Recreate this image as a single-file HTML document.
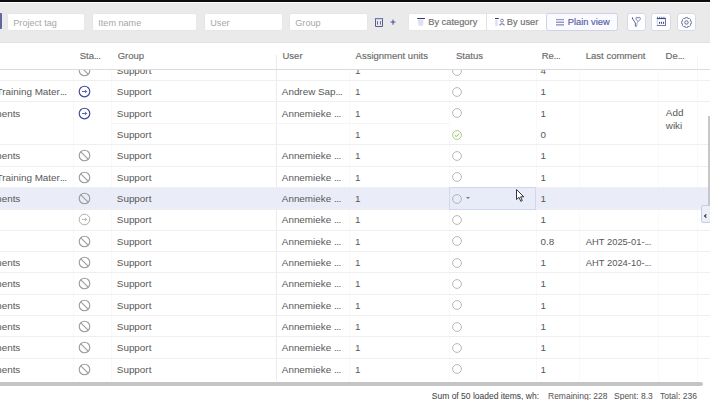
<!DOCTYPE html>
<html><head><meta charset="utf-8">
<style>
*{margin:0;padding:0;box-sizing:border-box}
html,body{width:710px;height:400px;overflow:hidden;background:#fff}
body{position:relative;font-family:"Liberation Sans",sans-serif;color:#4a4a4a}
.a{position:absolute;white-space:nowrap}
.inp{position:absolute;top:13px;height:18px;background:#fff;border:1px solid #e6e6e6;border-radius:2.5px;font-size:9.1px;color:#a6a6a6;padding-left:5.3px;line-height:19px}
.btn{position:absolute;height:17.5px;font-size:9.3px;line-height:16px;-webkit-text-stroke:0.18px}
.ib{position:absolute;top:12.7px;width:19.3px;height:18.5px;background:#fff;border:1px solid #d6d9ea;border-radius:3px}
.hd{position:absolute;font-size:9.5px;color:#6a6a6a;top:51.3px;line-height:10px;-webkit-text-stroke:0.15px}
.c{position:absolute;font-size:9.9px;color:#575757;line-height:12px;white-space:nowrap}
.rl{position:absolute;left:0;width:710px;height:1px;background:#efefef}
.cl{position:absolute;width:1px;background:#f8f8f8}
</style></head><body>

<div class="cl" style="left:72.5px;top:55px;height:326px;background:#f9f9f9"></div>
<div class="cl" style="left:110.5px;top:55px;height:326px;background:#f9f9f9"></div>
<div class="cl" style="left:275.6px;top:55px;height:326px;background:#ebebeb"></div>
<div class="cl" style="left:348.5px;top:55px;height:326px;background:#f9f9f9"></div>
<div class="cl" style="left:448.7px;top:55px;height:326px;background:#f9f9f9"></div>
<div class="cl" style="left:536.2px;top:55px;height:326px;background:#f9f9f9"></div>
<div class="cl" style="left:579.0px;top:55px;height:326px;background:#f9f9f9"></div>
<div class="cl" style="left:658.0px;top:55px;height:326px;background:#f9f9f9"></div>
<div class="cl" style="left:696.5px;top:55px;height:326px;background:#f9f9f9"></div>
<div class="a" style="left:0;top:187.37px;width:708px;height:22.53px;background:#eaecf8"></div>
<div class="rl" style="top:80.20px"></div>
<div class="rl" style="top:100.53px"></div>
<div class="rl" style="top:122.87px;background:#f4f4f4;left:110.5px;width:338px"></div>
<div class="rl" style="top:144.20px"></div>
<div class="rl" style="top:165.53px"></div>
<div class="rl" style="top:186.87px"></div>
<div class="rl" style="top:208.20px"></div>
<div class="rl" style="top:229.53px"></div>
<div class="rl" style="top:250.86px"></div>
<div class="rl" style="top:272.20px"></div>
<div class="rl" style="top:293.53px"></div>
<div class="rl" style="top:314.86px"></div>
<div class="rl" style="top:336.20px"></div>
<div class="rl" style="top:357.53px"></div>
<div class="a" style="left:78.4px;top:64.03px;line-height:0"><svg width="13" height="13" viewBox="0 0 13 13"><circle cx="6.5" cy="6.5" r="5.3" fill="none" stroke="#9c9c9c" stroke-width="1.1"/><line x1="2.8" y1="2.8" x2="10.2" y2="10.2" stroke="#9c9c9c" stroke-width="1.1"/></svg></div>
<div class="c" style="left:116.8px;top:64.83px">Support</div>
<div class="c" style="left:355px;top:64.83px">1</div>
<div class="a" style="left:451.3px;top:64.73px;line-height:0"><svg width="12" height="12" viewBox="0 0 12 12"><circle cx="6" cy="6" r="4.4" fill="none" stroke="#a6a6a6" stroke-width="0.8"/></svg></div>
<div class="c" style="left:540.5px;top:64.83px">4</div>
<div class="c" style="right:643.4px;top:86.17px">Training Mater<span style="letter-spacing:-0.5px">...</span></div>
<div class="a" style="left:78.4px;top:85.37px;line-height:0"><svg width="13" height="13" viewBox="0 0 13 13"><circle cx="6.5" cy="6.5" r="5.3" fill="none" stroke="#3c4a9c" stroke-width="1.15"/><path d="M4 6.5H8.6M7 4.9L8.6 6.5L7 8.1" fill="none" stroke="#3c4a9c" stroke-width="0.85"/></svg></div>
<div class="c" style="left:116.8px;top:86.17px">Support</div>
<div class="c" style="left:281.8px;top:86.17px">Andrew Sap<span style="letter-spacing:-0.5px">...</span></div>
<div class="c" style="left:355px;top:86.17px">1</div>
<div class="a" style="left:451.3px;top:86.07px;line-height:0"><svg width="12" height="12" viewBox="0 0 12 12"><circle cx="6" cy="6" r="4.4" fill="none" stroke="#a6a6a6" stroke-width="0.8"/></svg></div>
<div class="c" style="left:540.5px;top:86.17px">1</div>
<div class="c" style="right:689.7px;top:107.50px">Assignments</div>
<div class="a" style="left:78.4px;top:106.70px;line-height:0"><svg width="13" height="13" viewBox="0 0 13 13"><circle cx="6.5" cy="6.5" r="5.3" fill="none" stroke="#3c4a9c" stroke-width="1.15"/><path d="M4 6.5H8.6M7 4.9L8.6 6.5L7 8.1" fill="none" stroke="#3c4a9c" stroke-width="0.85"/></svg></div>
<div class="c" style="left:116.8px;top:107.50px">Support</div>
<div class="c" style="left:281.8px;top:107.50px">Annemieke <span style="letter-spacing:-0.5px">...</span></div>
<div class="c" style="left:355px;top:107.50px">1</div>
<div class="a" style="left:451.3px;top:107.40px;line-height:0"><svg width="12" height="12" viewBox="0 0 12 12"><circle cx="6" cy="6" r="4.4" fill="none" stroke="#a6a6a6" stroke-width="0.8"/></svg></div>
<div class="c" style="left:540.5px;top:107.50px">1</div>
<div class="c" style="left:665.8px;top:106.70px">Add</div>
<div class="c" style="left:665.8px;top:119.90px">wiki</div>
<div class="c" style="left:116.8px;top:128.83px">Support</div>
<div class="c" style="left:355px;top:128.83px">1</div>
<div class="a" style="left:451.3px;top:128.73px;line-height:0"><svg width="12" height="12" viewBox="0 0 12 12"><circle cx="6" cy="6" r="4.4" fill="none" stroke="#95bf6c" stroke-width="0.8"/><path d="M3.8 6.2L5.3 7.6L8.2 4.6" fill="none" stroke="#7aab48" stroke-width="0.9"/></svg></div>
<div class="c" style="left:540.5px;top:128.83px">0</div>
<div class="c" style="right:689.7px;top:150.17px">Assignments</div>
<div class="a" style="left:78.4px;top:149.37px;line-height:0"><svg width="13" height="13" viewBox="0 0 13 13"><circle cx="6.5" cy="6.5" r="5.3" fill="none" stroke="#9c9c9c" stroke-width="1.1"/><line x1="2.8" y1="2.8" x2="10.2" y2="10.2" stroke="#9c9c9c" stroke-width="1.1"/></svg></div>
<div class="c" style="left:116.8px;top:150.17px">Support</div>
<div class="c" style="left:281.8px;top:150.17px">Annemieke <span style="letter-spacing:-0.5px">...</span></div>
<div class="c" style="left:355px;top:150.17px">1</div>
<div class="a" style="left:451.3px;top:150.07px;line-height:0"><svg width="12" height="12" viewBox="0 0 12 12"><circle cx="6" cy="6" r="4.4" fill="none" stroke="#a6a6a6" stroke-width="0.8"/></svg></div>
<div class="c" style="left:540.5px;top:150.17px">1</div>
<div class="c" style="right:643.4px;top:171.50px">Training Mater<span style="letter-spacing:-0.5px">...</span></div>
<div class="a" style="left:78.4px;top:170.70px;line-height:0"><svg width="13" height="13" viewBox="0 0 13 13"><circle cx="6.5" cy="6.5" r="5.3" fill="none" stroke="#9c9c9c" stroke-width="1.1"/><line x1="2.8" y1="2.8" x2="10.2" y2="10.2" stroke="#9c9c9c" stroke-width="1.1"/></svg></div>
<div class="c" style="left:116.8px;top:171.50px">Support</div>
<div class="c" style="left:281.8px;top:171.50px">Annemieke <span style="letter-spacing:-0.5px">...</span></div>
<div class="c" style="left:355px;top:171.50px">1</div>
<div class="a" style="left:451.3px;top:171.40px;line-height:0"><svg width="12" height="12" viewBox="0 0 12 12"><circle cx="6" cy="6" r="4.4" fill="none" stroke="#a6a6a6" stroke-width="0.8"/></svg></div>
<div class="c" style="left:540.5px;top:171.50px">1</div>
<div class="c" style="right:689.7px;top:192.83px">Assignments</div>
<div class="a" style="left:78.4px;top:192.03px;line-height:0"><svg width="13" height="13" viewBox="0 0 13 13"><circle cx="6.5" cy="6.5" r="5.3" fill="none" stroke="#9c9c9c" stroke-width="1.1"/><line x1="2.8" y1="2.8" x2="10.2" y2="10.2" stroke="#9c9c9c" stroke-width="1.1"/></svg></div>
<div class="c" style="left:116.8px;top:192.83px">Support</div>
<div class="c" style="left:281.8px;top:192.83px">Annemieke <span style="letter-spacing:-0.5px">...</span></div>
<div class="c" style="left:355px;top:192.83px">1</div>
<div class="a" style="left:448.7px;top:186.97px;width:87.5px;height:22.93px;border:1px solid #d3d7ec;background:#e8ebf8"></div>
<div class="a" style="left:451.3px;top:192.73px;line-height:0"><svg width="12" height="12" viewBox="0 0 12 12"><circle cx="6" cy="6" r="4.4" fill="none" stroke="#a6a6a6" stroke-width="0.8"/></svg></div>
<div class="a" style="left:465.8px;top:197.13px;width:0;height:0;border-left:2.3px solid transparent;border-right:2.3px solid transparent;border-top:2.6px solid #7a7a7a"></div>
<div class="c" style="left:540.5px;top:192.83px">1</div>
<div class="a" style="left:78.4px;top:213.36px;line-height:0"><svg width="13" height="13" viewBox="0 0 13 13"><circle cx="6.5" cy="6.5" r="5.3" fill="none" stroke="#acacac" stroke-width="1"/><path d="M4 6.5H8.6M7 4.9L8.6 6.5L7 8.1" fill="none" stroke="#acacac" stroke-width="0.85"/></svg></div>
<div class="c" style="left:116.8px;top:214.16px">Support</div>
<div class="c" style="left:281.8px;top:214.16px">Annemieke <span style="letter-spacing:-0.5px">...</span></div>
<div class="c" style="left:355px;top:214.16px">1</div>
<div class="a" style="left:451.3px;top:214.06px;line-height:0"><svg width="12" height="12" viewBox="0 0 12 12"><circle cx="6" cy="6" r="4.4" fill="none" stroke="#a6a6a6" stroke-width="0.8"/></svg></div>
<div class="c" style="left:540.5px;top:214.16px">1</div>
<div class="a" style="left:78.4px;top:234.70px;line-height:0"><svg width="13" height="13" viewBox="0 0 13 13"><circle cx="6.5" cy="6.5" r="5.3" fill="none" stroke="#9c9c9c" stroke-width="1.1"/><line x1="2.8" y1="2.8" x2="10.2" y2="10.2" stroke="#9c9c9c" stroke-width="1.1"/></svg></div>
<div class="c" style="left:116.8px;top:235.50px">Support</div>
<div class="c" style="left:281.8px;top:235.50px">Annemieke <span style="letter-spacing:-0.5px">...</span></div>
<div class="c" style="left:355px;top:235.50px">1</div>
<div class="a" style="left:451.3px;top:235.40px;line-height:0"><svg width="12" height="12" viewBox="0 0 12 12"><circle cx="6" cy="6" r="4.4" fill="none" stroke="#a6a6a6" stroke-width="0.8"/></svg></div>
<div class="c" style="left:540.5px;top:235.50px">0.8</div>
<div class="c" style="left:585.8px;top:235.50px;font-size:9.4px">AHT 2025-01-<span style="letter-spacing:-0.5px">...</span></div>
<div class="c" style="right:689.7px;top:256.83px">Assignments</div>
<div class="a" style="left:78.4px;top:256.03px;line-height:0"><svg width="13" height="13" viewBox="0 0 13 13"><circle cx="6.5" cy="6.5" r="5.3" fill="none" stroke="#9c9c9c" stroke-width="1.1"/><line x1="2.8" y1="2.8" x2="10.2" y2="10.2" stroke="#9c9c9c" stroke-width="1.1"/></svg></div>
<div class="c" style="left:116.8px;top:256.83px">Support</div>
<div class="c" style="left:281.8px;top:256.83px">Annemieke <span style="letter-spacing:-0.5px">...</span></div>
<div class="c" style="left:355px;top:256.83px">1</div>
<div class="a" style="left:451.3px;top:256.73px;line-height:0"><svg width="12" height="12" viewBox="0 0 12 12"><circle cx="6" cy="6" r="4.4" fill="none" stroke="#a6a6a6" stroke-width="0.8"/></svg></div>
<div class="c" style="left:540.5px;top:256.83px">1</div>
<div class="c" style="left:585.8px;top:256.83px;font-size:9.4px">AHT 2024-10-<span style="letter-spacing:-0.5px">...</span></div>
<div class="c" style="right:689.7px;top:278.16px">Assignments</div>
<div class="a" style="left:78.4px;top:277.36px;line-height:0"><svg width="13" height="13" viewBox="0 0 13 13"><circle cx="6.5" cy="6.5" r="5.3" fill="none" stroke="#9c9c9c" stroke-width="1.1"/><line x1="2.8" y1="2.8" x2="10.2" y2="10.2" stroke="#9c9c9c" stroke-width="1.1"/></svg></div>
<div class="c" style="left:116.8px;top:278.16px">Support</div>
<div class="c" style="left:281.8px;top:278.16px">Annemieke <span style="letter-spacing:-0.5px">...</span></div>
<div class="c" style="left:355px;top:278.16px">1</div>
<div class="a" style="left:451.3px;top:278.06px;line-height:0"><svg width="12" height="12" viewBox="0 0 12 12"><circle cx="6" cy="6" r="4.4" fill="none" stroke="#a6a6a6" stroke-width="0.8"/></svg></div>
<div class="c" style="left:540.5px;top:278.16px">1</div>
<div class="c" style="right:689.7px;top:299.50px">Assignments</div>
<div class="a" style="left:78.4px;top:298.70px;line-height:0"><svg width="13" height="13" viewBox="0 0 13 13"><circle cx="6.5" cy="6.5" r="5.3" fill="none" stroke="#9c9c9c" stroke-width="1.1"/><line x1="2.8" y1="2.8" x2="10.2" y2="10.2" stroke="#9c9c9c" stroke-width="1.1"/></svg></div>
<div class="c" style="left:116.8px;top:299.50px">Support</div>
<div class="c" style="left:281.8px;top:299.50px">Annemieke <span style="letter-spacing:-0.5px">...</span></div>
<div class="c" style="left:355px;top:299.50px">1</div>
<div class="a" style="left:451.3px;top:299.40px;line-height:0"><svg width="12" height="12" viewBox="0 0 12 12"><circle cx="6" cy="6" r="4.4" fill="none" stroke="#a6a6a6" stroke-width="0.8"/></svg></div>
<div class="c" style="left:540.5px;top:299.50px">1</div>
<div class="c" style="right:689.7px;top:320.83px">Assignments</div>
<div class="a" style="left:78.4px;top:320.03px;line-height:0"><svg width="13" height="13" viewBox="0 0 13 13"><circle cx="6.5" cy="6.5" r="5.3" fill="none" stroke="#9c9c9c" stroke-width="1.1"/><line x1="2.8" y1="2.8" x2="10.2" y2="10.2" stroke="#9c9c9c" stroke-width="1.1"/></svg></div>
<div class="c" style="left:116.8px;top:320.83px">Support</div>
<div class="c" style="left:281.8px;top:320.83px">Annemieke <span style="letter-spacing:-0.5px">...</span></div>
<div class="c" style="left:355px;top:320.83px">1</div>
<div class="a" style="left:451.3px;top:320.73px;line-height:0"><svg width="12" height="12" viewBox="0 0 12 12"><circle cx="6" cy="6" r="4.4" fill="none" stroke="#a6a6a6" stroke-width="0.8"/></svg></div>
<div class="c" style="left:540.5px;top:320.83px">1</div>
<div class="c" style="right:689.7px;top:342.16px">Assignments</div>
<div class="a" style="left:78.4px;top:341.36px;line-height:0"><svg width="13" height="13" viewBox="0 0 13 13"><circle cx="6.5" cy="6.5" r="5.3" fill="none" stroke="#9c9c9c" stroke-width="1.1"/><line x1="2.8" y1="2.8" x2="10.2" y2="10.2" stroke="#9c9c9c" stroke-width="1.1"/></svg></div>
<div class="c" style="left:116.8px;top:342.16px">Support</div>
<div class="c" style="left:281.8px;top:342.16px">Annemieke <span style="letter-spacing:-0.5px">...</span></div>
<div class="c" style="left:355px;top:342.16px">1</div>
<div class="a" style="left:451.3px;top:342.06px;line-height:0"><svg width="12" height="12" viewBox="0 0 12 12"><circle cx="6" cy="6" r="4.4" fill="none" stroke="#a6a6a6" stroke-width="0.8"/></svg></div>
<div class="c" style="left:540.5px;top:342.16px">1</div>
<div class="c" style="right:689.7px;top:363.50px">Assignments</div>
<div class="a" style="left:78.4px;top:362.70px;line-height:0"><svg width="13" height="13" viewBox="0 0 13 13"><circle cx="6.5" cy="6.5" r="5.3" fill="none" stroke="#9c9c9c" stroke-width="1.1"/><line x1="2.8" y1="2.8" x2="10.2" y2="10.2" stroke="#9c9c9c" stroke-width="1.1"/></svg></div>
<div class="c" style="left:116.8px;top:363.50px">Support</div>
<div class="c" style="left:281.8px;top:363.50px">Annemieke <span style="letter-spacing:-0.5px">...</span></div>
<div class="c" style="left:355px;top:363.50px">1</div>
<div class="a" style="left:451.3px;top:363.40px;line-height:0"><svg width="12" height="12" viewBox="0 0 12 12"><circle cx="6" cy="6" r="4.4" fill="none" stroke="#a6a6a6" stroke-width="0.8"/></svg></div>
<div class="c" style="left:540.5px;top:363.50px">1</div>
<div class="a" style="left:0;top:42.5px;width:710px;height:26.7px;background:#fff"></div>
<div class="a" style="left:0;top:68.8px;width:710px;height:1px;background:#dadada"></div>
<div class="cl" style="left:275.6px;top:55px;height:14px;background:#ebebeb"></div>
<div class="cl" style="left:696.5px;top:55px;height:14px;background:#f5f5f5"></div>
<div class="hd a" style="left:79.7px">Sta<span style="letter-spacing:-0.55px">...</span></div>
<div class="hd a" style="left:117.7px">Group</div>
<div class="hd a" style="left:282.5px">User</div>
<div class="hd a" style="left:355.6px">Assignment units</div>
<div class="hd a" style="left:456px">Status</div>
<div class="hd a" style="left:541.7px">Re<span style="letter-spacing:-0.55px">...</span></div>
<div class="hd a" style="left:585.8px">Last comment</div>
<div class="hd a" style="left:665.6px">De<span style="letter-spacing:-0.55px">...</span></div>
<div class="a" style="left:0;top:0;width:710px;height:2px;background:#0d0d0d"></div>
<div class="a" style="left:0;top:2px;width:710px;height:40.5px;background:#eaeaea"></div>
<div class="a" style="left:0;top:2px;width:710px;height:1px;background:#fbfbfb"></div>
<div class="a" style="left:0;top:42px;width:710px;height:1px;background:#e1e1e1"></div>
<div class="a" style="left:-2px;top:13.3px;width:3.7px;height:16.2px;background:#62689e;border-radius:1px"></div>
<div class="inp" style="left:7px;width:78px">Project tag</div>
<div class="inp" style="left:92px;width:105px">Item name</div>
<div class="inp" style="left:204px;width:79px">User</div>
<div class="inp" style="left:289px;width:79px">Group</div>
<div class="a" style="left:374px;top:17px;line-height:0"><svg width="10" height="11" viewBox="0 0 10 11"><path d="M0.9 1.6H9.1" stroke="#6b76bd" stroke-width="1.2"/><path d="M1.5 2.2V9.5H8.5V2.2" fill="none" stroke="#575d8e" stroke-width="1"/><path d="M3.5 4.2V7.6M6.5 4.2V7.6" stroke="#575d8e" stroke-width="0.9"/></svg></div>
<div class="a" style="left:389.5px;top:18.7px;line-height:0"><svg width="7" height="7" viewBox="0 0 7 7"><path d="M3 0.6V5.7M0.6 3.05H5.4" stroke="#3f4d96" stroke-width="1"/></svg></div>
<div class="a" style="left:407.8px;top:13px;width:210px;height:18px;background:#fff;border-radius:2.5px;border:1px solid #e6e6e6"></div>
<div class="a" style="left:485.6px;top:13px;width:1px;height:18px;background:#e2e2e2"></div>
<div class="a" style="left:546.3px;top:13px;width:71.5px;height:18px;border:1px solid #cdd1ea;border-radius:2.5px;background:#fbfbff"></div>
<div class="btn a" style="left:428.2px;top:13.8px;color:#727272">By category</div>
<div class="btn a" style="left:506.8px;top:13.8px;color:#727272">By user</div>
<div class="btn a" style="left:567.8px;top:13.7px;color:#5661a8">Plain view</div>
<div class="a" style="left:417px;top:18px;line-height:0"><svg width="9" height="9" viewBox="0 0 9 9"><rect x="0.2" y="0" width="7.8" height="1" fill="#2f3a78"/><path d="M0.6 1.5H6.6L6 7.8H1.4Z" fill="#dde0f2"/></svg></div>
<div class="a" style="left:494.8px;top:17.8px;line-height:0"><svg width="10" height="9" viewBox="0 0 10 9"><rect x="0" y="0" width="3.8" height="1" fill="#2f3a78"/><path d="M0.3 1.6H2.7V8H0.3Z" fill="#dde0f2"/><circle cx="7" cy="2.6" r="1.45" fill="none" stroke="#6870a8" stroke-width="0.85"/><path d="M4.9 7.4V6.4Q7 5.1 9.1 6.4V7.4" fill="none" stroke="#555c8c" stroke-width="0.95"/></svg></div>
<div class="a" style="left:556px;top:19px;line-height:0"><svg width="9" height="7" viewBox="0 0 9 7"><path d="M0 0.6H8M0 3.2H8M0 5.9H8" stroke="#4f5aa0" stroke-width="0.9"/><path d="M0 0.6H8" stroke="#9aa0cc" stroke-width="0.9"/></svg></div>
<div class="ib" style="left:626.5px"></div>
<div class="ib" style="left:651.4px"></div>
<div class="ib" style="left:677px"></div>
<div class="a" style="left:631px;top:16px;line-height:0"><svg width="11" height="12" viewBox="0 0 11 12"><path d="M1.2 2.3L4.4 7V10.2L5.6 10.6" fill="none" stroke="#4d5794" stroke-width="0.9"/><path d="M1 2.2H2" stroke="#2e3a80" stroke-width="1.2"/><path d="M7.1 5.8L5.9 7.2V10" fill="none" stroke="#8a90bd" stroke-width="0.8"/><path d="M7.1 2.3C6.8 0.9 4.8 1 4.9 2.5C5 3.5 6 4.4 7.1 5.6C8.2 4.4 9.3 3.5 9.4 2.5C9.4 1 7.4 0.9 7.1 2.3Z" fill="none" stroke="#5a6399" stroke-width="0.85"/></svg></div>
<div class="a" style="left:656px;top:16px;line-height:0"><svg width="11" height="11" viewBox="0 0 11 11"><g fill="#4e5894"><rect x="1.2" y="0.8" width="0.9" height="1.2"/><rect x="3.3" y="0.8" width="0.9" height="1.2"/><rect x="5.4" y="0.8" width="0.9" height="1.2"/><rect x="7.5" y="0.8" width="0.9" height="1.2"/></g><rect x="0.8" y="2" width="9.2" height="1.1" fill="#3f4a8a"/><rect x="0.8" y="3" width="1" height="6.2" fill="#c9cde9"/><rect x="9.2" y="2" width="0.8" height="7.4" fill="#4e5894"/><rect x="0.8" y="9.1" width="9.2" height="0.8" fill="#4e5894"/><g fill="#3f4a8a"><rect x="3" y="5.8" width="1.1" height="2"/><rect x="5" y="5.8" width="1.1" height="2"/><rect x="7" y="5.8" width="1.1" height="2"/></g></svg></div>
<div class="a" style="left:681px;top:16.7px;line-height:0"><svg width="11" height="11" viewBox="0 0 11 11"><polygon points="9.06,3.91 10.41,4.30 10.41,6.70 9.06,7.09 9.14,6.89 9.82,8.12 8.12,9.82 6.89,9.14 7.09,9.06 6.70,10.41 4.30,10.41 3.91,9.06 4.11,9.14 2.88,9.82 1.18,8.12 1.86,6.89 1.94,7.09 0.59,6.70 0.59,4.30 1.94,3.91 1.86,4.11 1.18,2.88 2.88,1.18 4.11,1.86 3.91,1.94 4.30,0.59 6.70,0.59 7.09,1.94 6.89,1.86 8.12,1.18 9.82,2.88 9.14,4.11" fill="none" stroke="#6e749e" stroke-width="0.85" stroke-linejoin="round"/><circle cx="5.5" cy="5.5" r="1.7" fill="none" stroke="#5f6590" stroke-width="1"/></svg></div>
<div class="a" style="left:708.2px;top:115.5px;width:2px;height:90px;background:#c7c7c7"></div>
<div class="a" style="left:701.3px;top:205.3px;width:10px;height:18.2px;background:#eceef8;border:1px solid #c7cbe6;border-radius:2px"></div>
<div class="a" style="left:704.2px;top:212.5px;line-height:0"><svg width="3" height="4" viewBox="0 0 3 4"><path d="M2.4 0.4L0.6 2L2.4 3.6" fill="none" stroke="#2a2a2a" stroke-width="1.1"/></svg></div>
<div class="a" style="left:-3px;top:382px;width:706px;height:4.2px;background:#c4c4c4;border-radius:2px"></div>
<div class="a" style="left:431.8px;top:391.2px;font-size:8.5px;line-height:10px;-webkit-text-stroke:0.05px;color:#454545">Sum of 50 loaded items, wh:</div>
<div class="a" style="left:548px;top:391.2px;font-size:8.5px;line-height:10px;-webkit-text-stroke:0.05px;color:#5a5a5a">Remaining: 228</div>
<div class="a" style="left:614px;top:391.2px;font-size:8.5px;line-height:10px;-webkit-text-stroke:0.05px;color:#5a5a5a">Spent: 8.3</div>
<div class="a" style="left:660px;top:391.2px;font-size:8.5px;line-height:10px;-webkit-text-stroke:0.05px;color:#5a5a5a">Total: 236</div>
<div class="a" style="left:515.5px;top:189px;line-height:0"><svg width="10" height="14" viewBox="0 0 10 14"><path d="M0.5 0.5V10.5L3 8.3L4.8 12.3L6.3 11.6L4.6 7.8H7.8Z" fill="#fff" stroke="#222" stroke-width="0.9" stroke-linejoin="round"/></svg></div>
</body></html>
